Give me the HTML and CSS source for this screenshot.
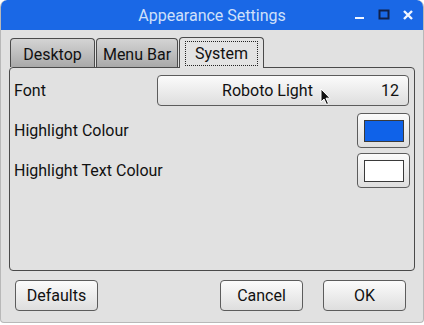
FILE: index.html
```html
<!DOCTYPE html>
<html lang="en">
<head>
  <meta charset="UTF-8">
  <title>Appearance Settings</title>
<link rel="stylesheet" href="styles.css">
</head>
<body>
<div class="window">
  <header class="titlebar">
    <span class="title">Appearance Settings</span>
    <div class="controls">
      <svg width="12" height="12" viewBox="0 0 12 12"><rect x="1" y="8" width="9" height="2" fill="#f2f6ff"/></svg>
      <svg width="12" height="12" viewBox="0 0 12 12"><rect x="1.5" y="1.5" width="9" height="8" fill="none" stroke="#10204a" stroke-width="2"/></svg>
      <svg width="12" height="12" viewBox="0 0 12 12"><path d="M2 2 L10 10 M10 2 L2 10" stroke="#f2f6ff" stroke-width="2.4"/></svg>
    </div>
  </header>
  <div class="content">
    <div class="tabs">
      <div class="tab">Desktop</div>
      <div class="tab">Menu Bar</div>
      <div class="tab active"><span class="focus">System</span></div>
    </div>
    <div class="panel">
      <div class="row">
        <span class="label">Font</span>
        <button class="btn font-btn">
          <span class="font-name">Roboto Light</span>
          <span class="font-size">12</span>
        </button>
      </div>
      <div class="row row-colour">
        <span class="label">Highlight Colour</span>
        <button class="btn colour-btn"><span class="swatch blue"></span></button>
      </div>
      <div class="row row-colour2">
        <span class="label">Highlight Text Colour</span>
        <button class="btn colour-btn"><span class="swatch white"></span></button>
      </div>
    </div>
    <div class="footer">
      <button class="btn action">Defaults</button>
      <div class="spacer"></div>
      <button class="btn action">Cancel</button>
      <button class="btn action">OK</button>
    </div>
  </div>
  <svg class="cursor" width="12" height="18" viewBox="0 0 12 18">
    <path d="M1 1 L1 14 L4 11 L6.5 16.5 L8.5 15.6 L6 10.2 L10 10.2 Z" fill="#111" stroke="#fff" stroke-width="1"/>
  </svg>
</div>
</body>
</html>
```

FILE: styles.css
```css
body {
  margin: 0;
  padding: 0;
  background: #ffffff;
  font-family: Roboto, "Liberation Sans", sans-serif;
  font-size: 16px;
  color: #111;
}
.window {
  position: relative;
  width: 422px;
  height: 322px;
  border: 1px solid #b8b8b8;
  border-top: none;
  border-radius: 7px 7px 4px 4px;
  background: #e1e1e1;
  overflow: hidden;
}
.titlebar {
  display: flex;
  align-items: center;
  justify-content: center;
  height: 30px;
  margin: 0 -1px;
  background: #1a68e6;
  border-radius: 7px 7px 0 0;
  position: relative;
}
.title {
  color: #cfe0fa;
  font-size: 16px;
  padding-top: 1px;
}
.controls {
  position: absolute;
  right: 10px;
  top: 9px;
  display: flex;
  gap: 12px;
}
.content {
  padding: 7px 8px 0 8px;
}
.tabs {
  display: flex;
  align-items: flex-end;
  height: 30px;
  padding-left: 1px;
}
.tab {
  box-sizing: border-box;
  height: 29px;
  display: flex;
  align-items: center;
  justify-content: center;
  white-space: nowrap;
  border: 1px solid #4a4a4a;
  border-bottom: none;
  border-radius: 4px 4px 0 0;
  background: linear-gradient(#d4d4d4, #a9a9a9);
  margin-right: 1px;
  padding-top: 3px;
}
.tab:nth-child(1) { width: 85px; }
.tab:nth-child(2) { width: 82px; }
.tab.active {
  width: 85px;
  height: 31px;
  margin-bottom: -1px;
  background: #e3e3e3;
  position: relative;
  z-index: 1;
  padding: 3px 0 0 5px;
  align-items: flex-start;
  justify-content: flex-start;
}
.focus {
  box-sizing: border-box;
  width: 73px;
  height: 25px;
  border: 1px dotted #222;
  text-align: center;
  line-height: 23px;
}
.panel {
  box-sizing: border-box;
  height: 204px;
  border: 1px solid #4a4a4a;
  border-radius: 4px;
  padding: 7px 5px 0 4px;
}
.row {
  display: flex;
  align-items: center;
  justify-content: space-between;
}
.row-colour { margin-top: 7px; }
.row-colour2 { margin-top: 5px; }
.btn {
  box-sizing: border-box;
  border: 1px solid #5c5c5c;
  border-radius: 4px;
  background: linear-gradient(#fbfbfb, #dedede);
  font-family: inherit;
  font-size: 16px;
  color: #111;
  padding: 0;
}
.font-btn {
  width: 252px;
  height: 31px;
  display: flex;
  align-items: center;
  padding: 0 9px 0 0;
}
.font-name {
  flex: 1;
  text-align: center;
  padding-right: 4px;
}
.colour-btn {
  width: 53px;
  height: 35px;
  display: flex;
  align-items: center;
  justify-content: center;
  margin-right: -1px;
}
.swatch {
  box-sizing: border-box;
  width: 40px;
  height: 22px;
  border: 1px solid #3a3a3a;
}
.swatch.blue { background: #0f62e9; }
.swatch.white { background: #ffffff; }
.footer {
  display: flex;
  margin-top: 9px;
  padding: 0 9px 0 6px;
  gap: 20px;
}
.spacer { flex: 1; }
.action {
  width: 83px;
  height: 31px;
}
.cursor {
  position: absolute;
  left: 319px;
  top: 88px;
}
```
